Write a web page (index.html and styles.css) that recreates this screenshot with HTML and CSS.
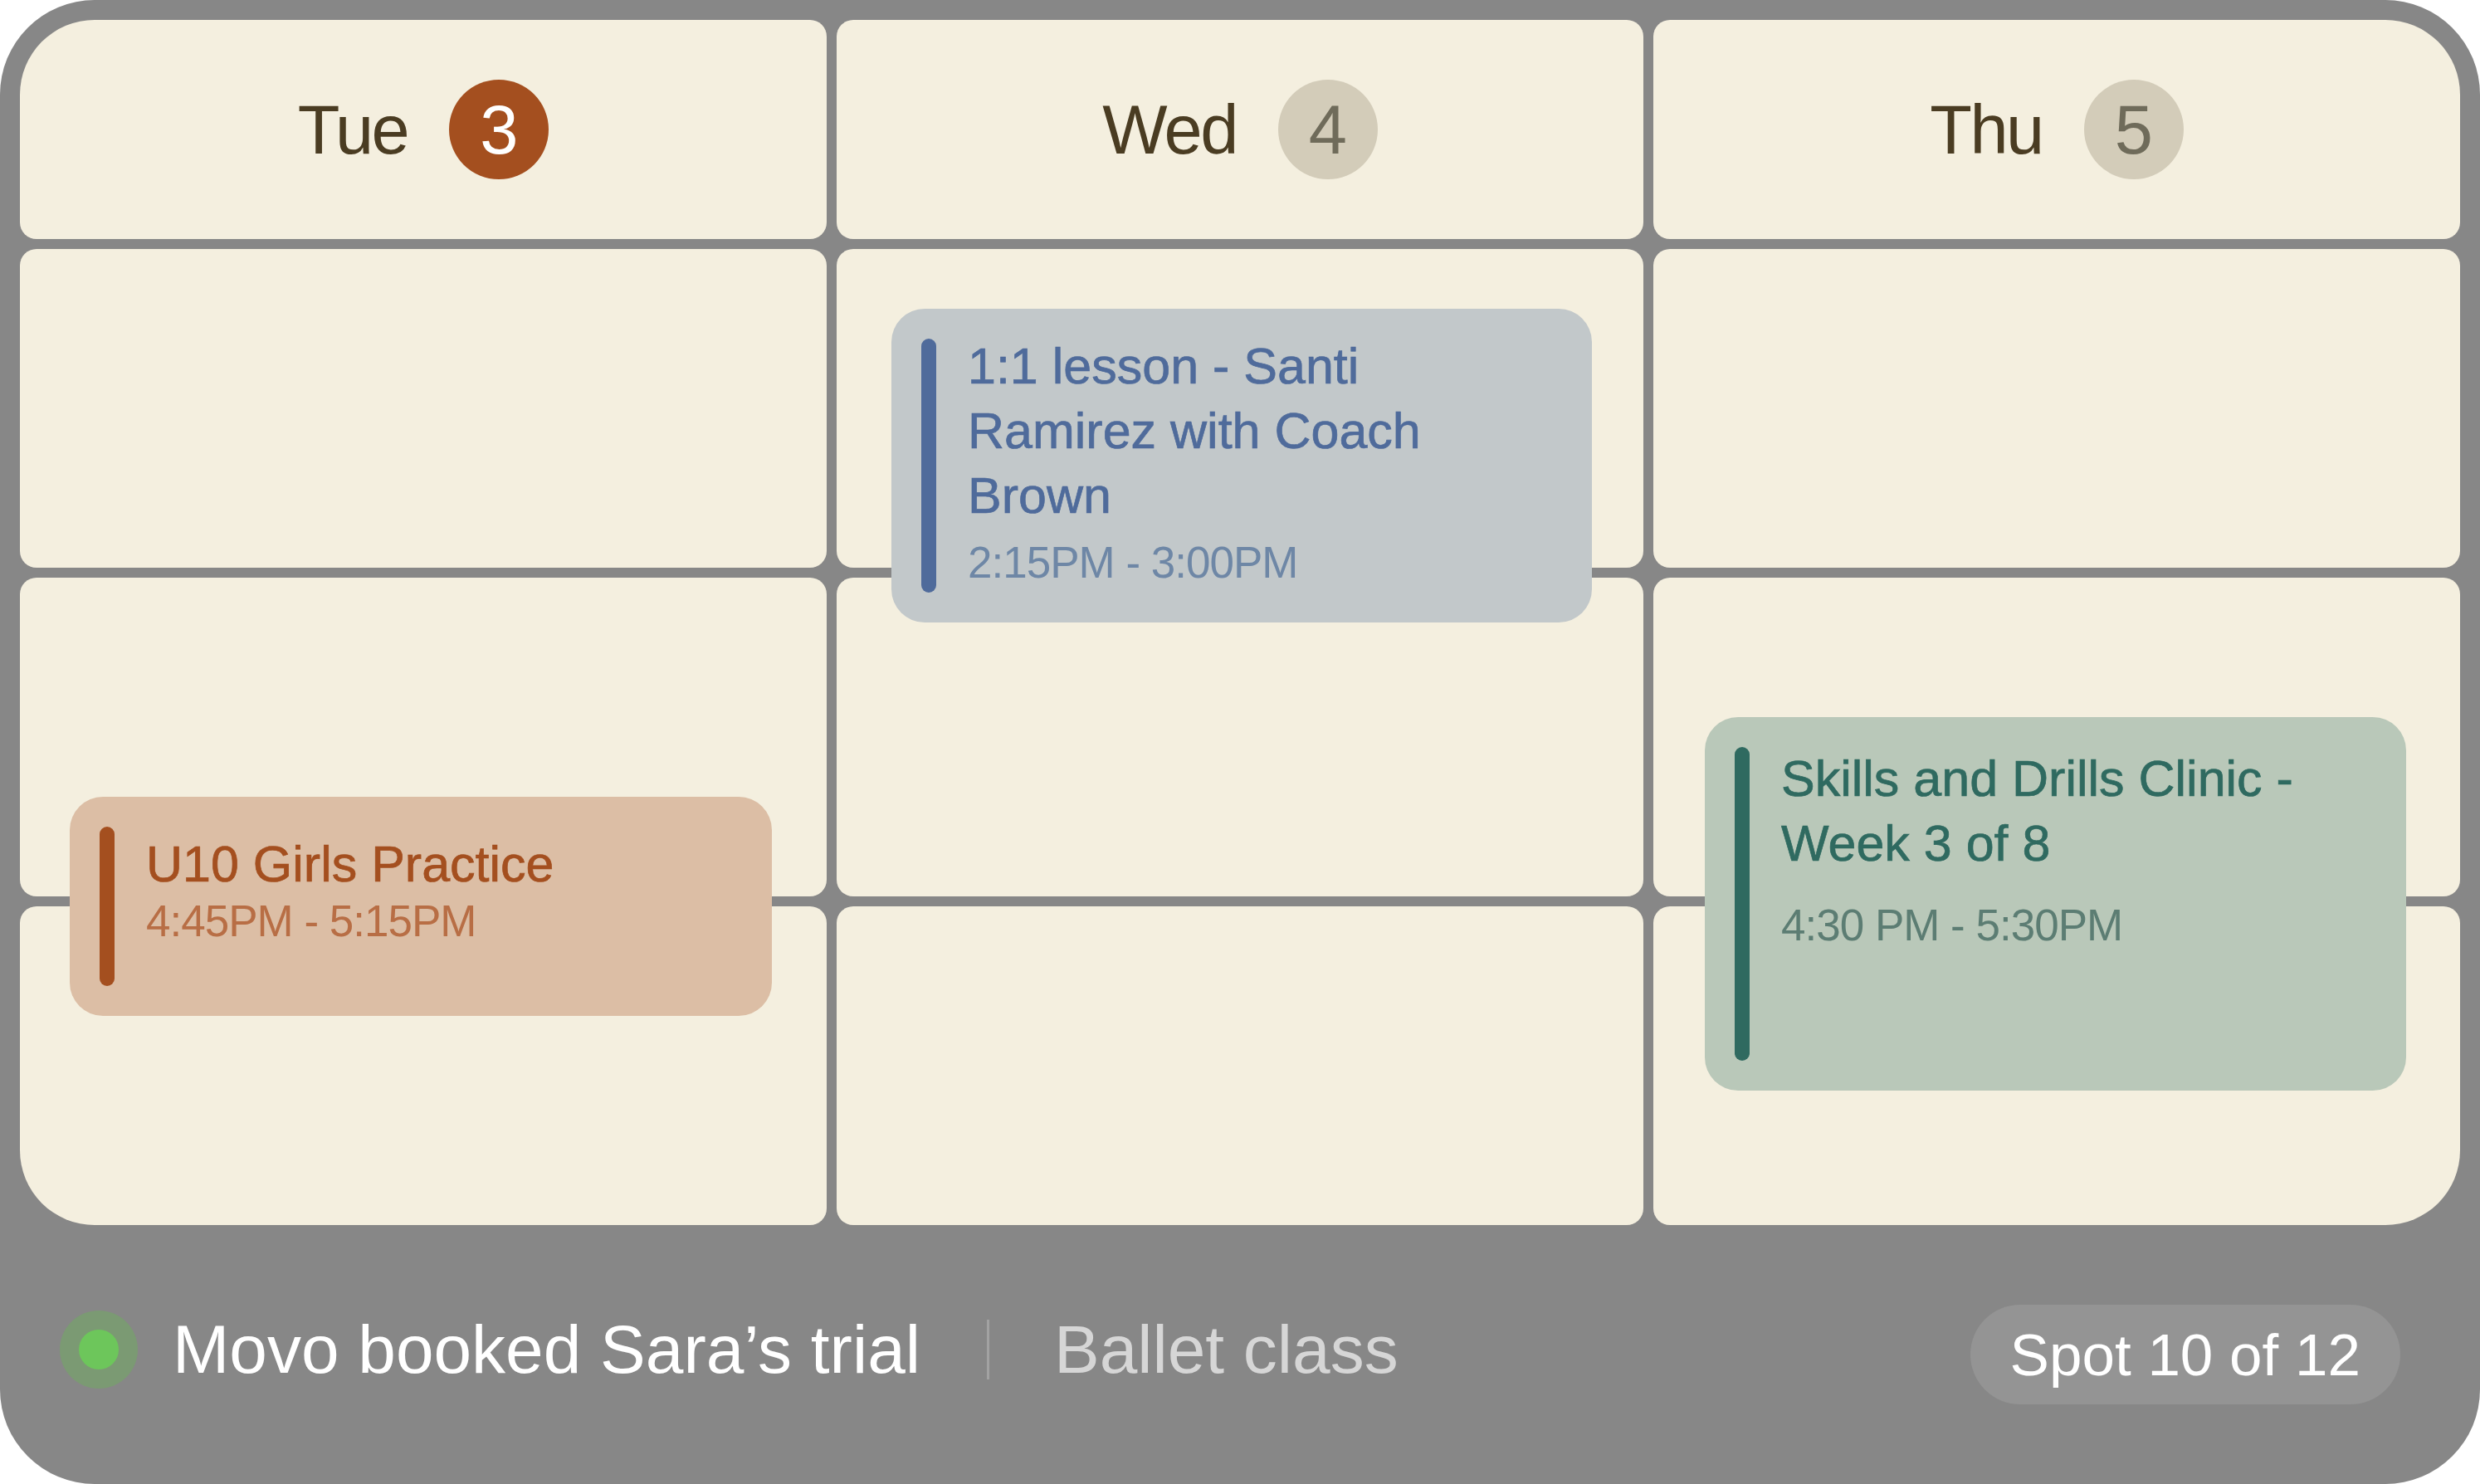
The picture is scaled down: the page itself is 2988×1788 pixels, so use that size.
FILE: index.html
```html
<!DOCTYPE html>
<html lang="en">
<head>
<meta charset="utf-8">
<title>Schedule</title>
<link rel="stylesheet" href="styles.css">
</head>
<body>
<div class="frame">
  <div class="grid">
    <div class="cell head tl"><span class="day">Tue</span><span class="badge today">3</span></div>
    <div class="cell head"><span class="day">Wed</span><span class="badge">4</span></div>
    <div class="cell head tr"><span class="day">Thu</span><span class="badge">5</span></div>

    <div class="cell"></div>
    <div class="cell"></div>
    <div class="cell"></div>

    <div class="cell"></div>
    <div class="cell"></div>
    <div class="cell"></div>

    <div class="cell bl"></div>
    <div class="cell"></div>
    <div class="cell br"></div>

    <div class="event blue">
      <div class="bar"></div>
      <div class="content">
        <div class="title">1:1 lesson - Santi<br>Ramirez with Coach<br>Brown</div>
        <div class="time">2:15PM - 3:00PM</div>
      </div>
    </div>

    <div class="event orange">
      <div class="bar"></div>
      <div class="content">
        <div class="title">U10 Girls Practice</div>
        <div class="time">4:45PM - 5:15PM</div>
      </div>
    </div>

    <div class="event green">
      <div class="bar"></div>
      <div class="content">
        <div class="title">Skills and Drills Clinic -<br>Week 3 of 8</div>
        <div class="time">4:30 PM - 5:30PM</div>
      </div>
    </div>
  </div>

  <div class="status">
    <div class="status-left">
      <span class="dot"><span class="dot-core"></span></span>
      <span class="msg">Movo booked Sara’s trial</span>
      <span class="sep"></span>
      <span class="sub">Ballet class</span>
    </div>
    <div class="pill">Spot 10 of 12</div>
  </div>
</div>
</body>
</html>
```

FILE: styles.css
```css
* {
  box-sizing: border-box;
}

html, body {
  margin: 0;
  padding: 0;
  background: #ffffff;
}

body {
  font-family: "Liberation Sans", Arial, Helvetica, sans-serif;
}

.frame {
  width: 2988px;
  height: 1788px;
  background: #878787;
  border-radius: 114px;
  padding: 24px 24px 0 24px;
  display: flex;
  flex-direction: column;
  overflow: hidden;
}

.grid {
  position: relative;
  display: grid;
  grid-template-columns: repeat(3, 972px);
  grid-template-rows: 264px repeat(3, 384px);
  gap: 12px;
  flex: none;
}

.cell {
  background: #f4efdf;
  border-radius: 20px;
}

.cell.tl { border-top-left-radius: 90px; }
.cell.tr { border-top-right-radius: 90px; }
.cell.bl { border-bottom-left-radius: 90px; }
.cell.br { border-bottom-right-radius: 90px; }

.head {
  display: flex;
  align-items: center;
  justify-content: center;
  gap: 50px;
}

.day {
  font-size: 83px;
  color: #4a3c22;
  letter-spacing: -2.5px;
  line-height: 1;
}

.badge {
  width: 120px;
  height: 120px;
  border-radius: 50%;
  background: #d3ccb9;
  color: #6f6b5a;
  font-size: 83px;
  line-height: 1;
  display: flex;
  align-items: center;
  justify-content: center;
}

.badge.today {
  background: #a44f1f;
  color: #ffffff;
}

/* events lie over the grid cells; their grid area is the containing block */
.event {
  position: absolute;
  z-index: 1;
  display: flex;
  gap: 38px;
  padding: 36px;
  border-radius: 40px;
}

.bar {
  width: 18px;
  border-radius: 9px;
  flex: none;
  align-self: stretch;
}

.content {
  display: flex;
  flex-direction: column;
}

.title {
  font-size: 61px;
  line-height: 78px;
  -webkit-text-stroke: 0.7px currentColor;
}

.time {
  font-size: 53px;
  line-height: 68px;
  letter-spacing: -1px;
}

.event.blue {
  grid-column: 2;
  grid-row: 2 / 4;
  left: 66px;
  top: 72px;
  width: 844px;
  height: 378px;
  background: #c2c8ca;
}
.event.blue .bar { background: #4f6b9b; }
.event.blue .title { color: #4f6b9b; }
.event.blue .time { color: #6e87a6; margin-top: 8px; }
.event.blue .content { margin-top: -6px; }

.event.orange {
  grid-column: 1;
  grid-row: 3 / 5;
  left: 60px;
  top: 264px;
  width: 846px;
  height: 264px;
  background: #dcbea5;
}
.event.orange .bar { background: #a44f1f; }
.event.orange .title { color: #a44f1f; }
.event.orange .time { color: #b86e45; margin-top: -4px; }
.event.orange .content { margin-top: 6px; }

.event.green {
  grid-column: 3;
  grid-row: 3 / 5;
  left: 62px;
  top: 168px;
  width: 845px;
  height: 450px;
  background: #b9c8b9;
}
.event.green .bar { background: #2f6a60; }
.event.green .title { color: #2f6a60; }
.event.green .time { color: #5c7d73; margin-top: 26px; }
.event.green .content { margin-top: -1px; }

/* status bar */
.status {
  height: 312px;
  flex: none;
  display: flex;
  align-items: center;
  justify-content: space-between;
  padding: 0 72px 0 48px;
}

.status-left {
  display: flex;
  align-items: center;
  margin-bottom: 12px;
}

.dot {
  width: 94px;
  height: 94px;
  border-radius: 50%;
  background: #7b9a73;
  display: flex;
  align-items: center;
  justify-content: center;
  margin-right: 42px;
}

.dot-core {
  width: 48px;
  height: 48px;
  border-radius: 50%;
  background: #6dc65b;
}

.msg {
  font-size: 82px;
  color: #ffffff;
  line-height: 1;
}

.sep {
  width: 3px;
  height: 72px;
  background: #a2a2a2;
  margin: 0 78px 0 80px;
}

.sub {
  font-size: 82px;
  color: #d6d6d6;
  line-height: 1;
}

.pill {
  height: 120px;
  border-radius: 60px;
  background: #949494;
  color: #ffffff;
  font-size: 71px;
  padding: 0 48px;
  display: flex;
  align-items: center;
}
```
